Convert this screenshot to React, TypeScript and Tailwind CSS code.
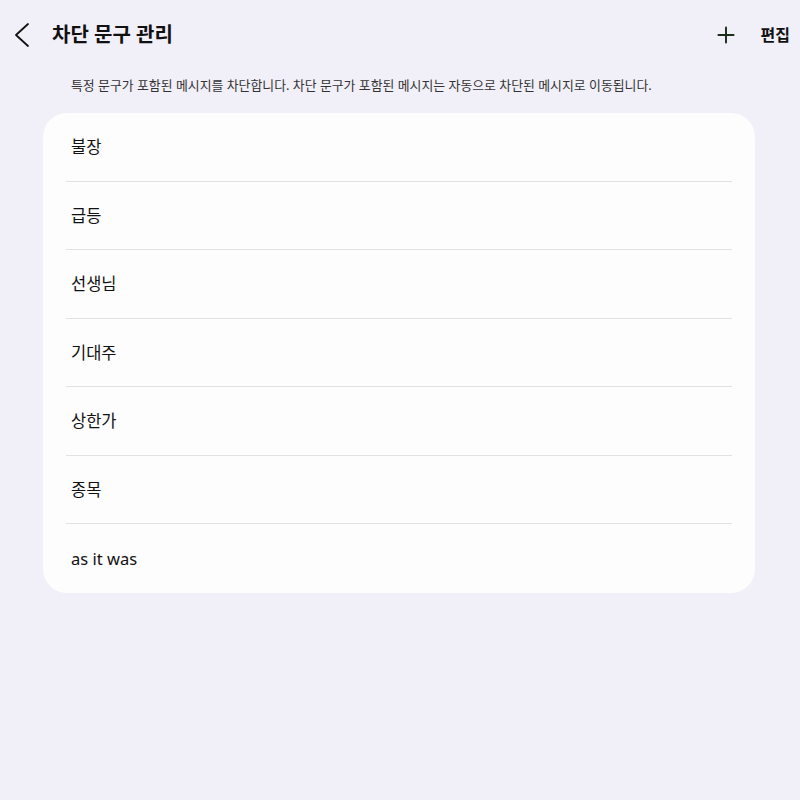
import { Plus } from "lucide-react"

const phrases = ["불장", "급등", "선생님", "기대주", "상한가", "종목", "as it was"]

export default function App() {
  return (
    <div
      className="min-h-[800px] w-full bg-[#f1eff8] text-[#111]"
      style={{ fontFamily: '"Noto Sans", "Noto Sans CJK KR", sans-serif' }}
    >
      <header className="flex h-[70px] items-center pl-[14px] pr-[10px]">
        <svg width="16" height="26" viewBox="0 0 16 26" fill="none" stroke="#111" strokeWidth="1.8" strokeLinecap="round" strokeLinejoin="round">
          <polyline points="14,2 2,13 14,24" />
        </svg>
        <h1 className="ml-[22px] text-[20px] font-bold">차단 문구 관리</h1>
        <div className="ml-auto flex items-center">
          <Plus className="h-[26px] w-[26px] text-[#1a2e1a]" strokeWidth={1.8} />
          <span className="ml-[22px] text-[16px] font-bold">편집</span>
        </div>
      </header>

      <p className="pl-[71px] text-[12.9px] leading-[30px] text-[#333]">
        특정 문구가 포함된 메시지를 차단합니다. 차단 문구가 포함된 메시지는 자동으로 차단된 메시지로 이동됩니다.
      </p>

      <div className="mx-[43px] mt-[13px] w-[712px] rounded-[24px] bg-[#fdfdfd] px-[23px]">
        {phrases.map((p, i) => (
          <div
            key={p}
            className={
              "flex h-[68.5px] items-center pl-[5px] pt-[2px] text-[16.5px] " +
              (i < phrases.length - 1 ? "border-b border-[#e2e1e6]" : "")
            }
          >
            {p}
          </div>
        ))}
      </div>
    </div>
  )
}
